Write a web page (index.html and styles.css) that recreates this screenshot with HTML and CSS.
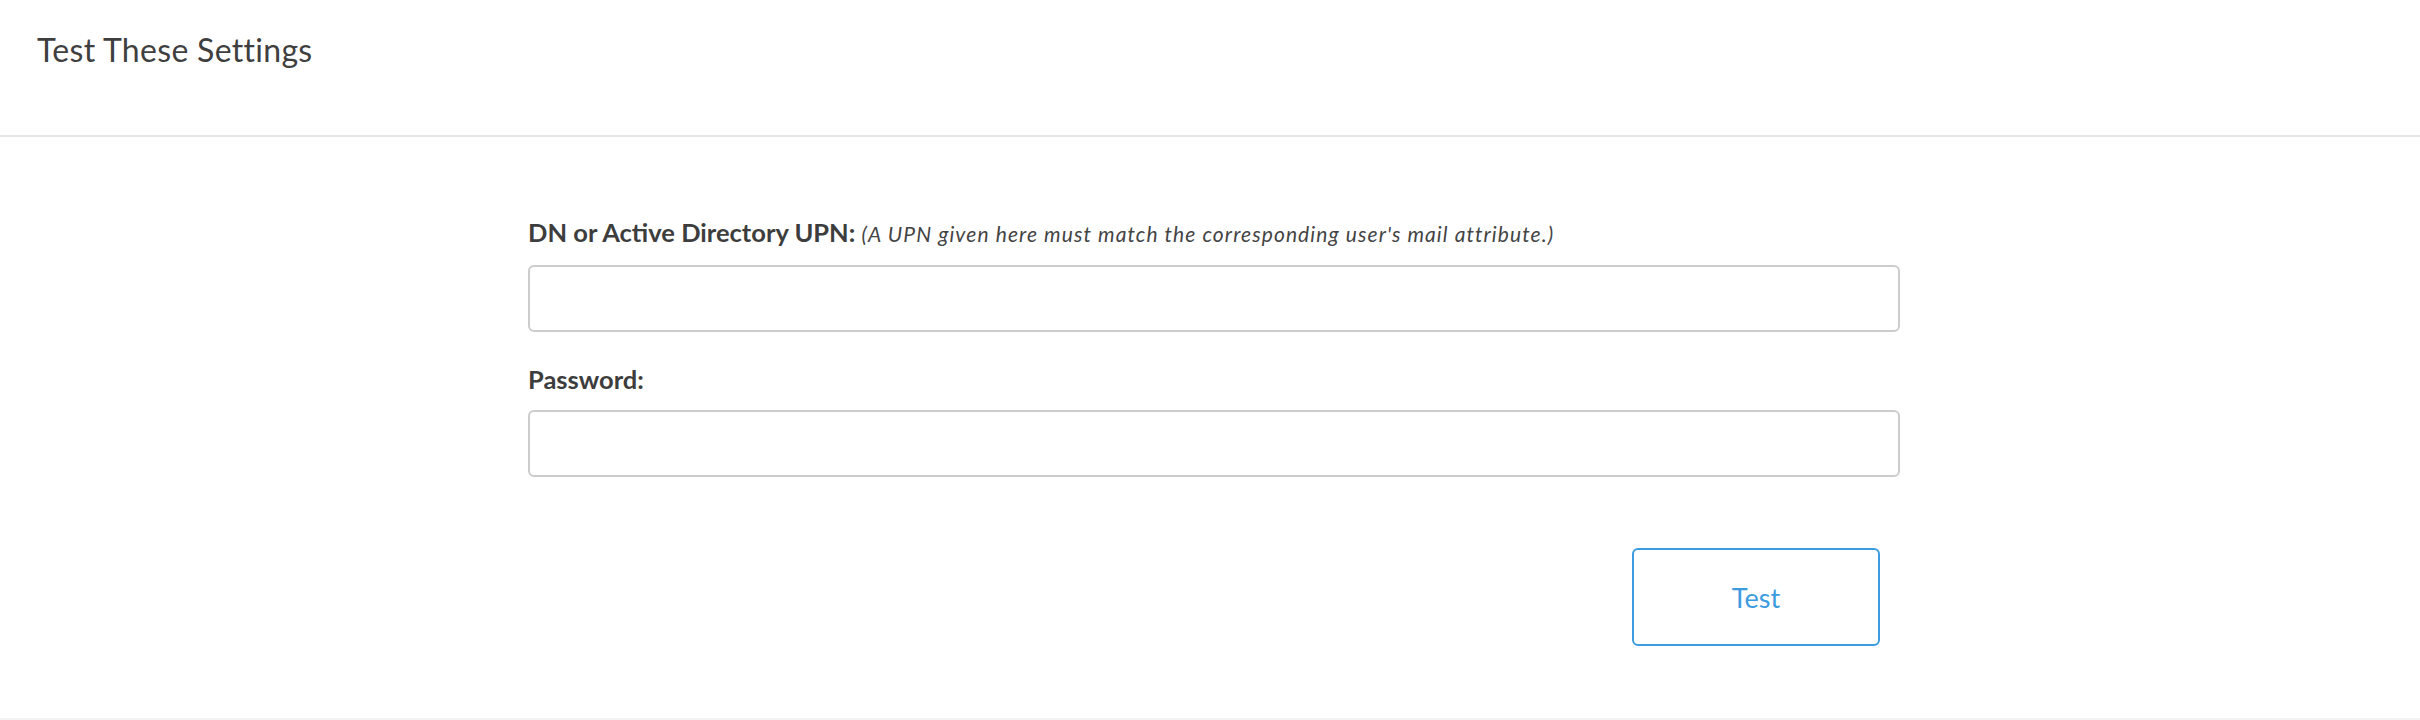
FILE: index.html
```html
<!DOCTYPE html>
<html lang="en">
<head>
<meta charset="utf-8">
<title>Test These Settings</title>
<link rel="stylesheet" href="styles.css">
</head>
<body>
<header class="panel-header">
  <h2 class="panel-title">Test These Settings</h2>
</header>
<main class="panel-body">
  <form class="test-form">
    <label class="field-label" for="upn">DN or Active Directory UPN: <span class="field-note">(A UPN given here must match the corresponding user's mail attribute.)</span></label>
    <input class="field-input" id="upn" type="text">
    <label class="field-label field-label-second" for="pw">Password:</label>
    <input class="field-input" id="pw" type="password">
    <div class="actions">
      <button class="btn-test" type="button">Test</button>
    </div>
  </form>
</main>
<div class="bottom-band"></div>
</body>
</html>
```

FILE: styles.css
```css
html, body {
  margin: 0;
  padding: 0;
  background: #ffffff;
}
body {
  font-family: Lato, "Open Sans", "Liberation Sans", sans-serif;
  color: #3d3d3d;
}
.panel-header {
  padding: 30px 37px 65px;
  border-bottom: 2px solid #e6e6e6;
}
.panel-title {
  margin: 0;
  font-size: 32px;
  line-height: 40px;
  font-weight: 400;
  letter-spacing: 0.3px;
  color: #3f3f3f;
}
.panel-body {
  padding: 80px 0 72px 8px;
}
.test-form {
  width: 1372px;
  margin: 0 auto;
  display: flex;
  flex-direction: column;
}
.field-label {
  display: block;
  font-size: 25.5px;
  line-height: 30px;
  font-weight: 700;
  color: #3d3d3d;
}
.field-label-second {
  margin-top: 32px;
}
.field-note {
  font-size: 21px;
  font-style: italic;
  font-weight: 400;
  letter-spacing: 1.1px;
  color: #444444;
}
.field-input {
  box-sizing: border-box;
  margin: 16px 0 0;
  width: 100%;
  height: 67px;
  border: 2px solid #cccccc;
  border-radius: 6px;
  background: #ffffff;
  padding: 0 16px;
  font: inherit;
  font-size: 22px;
  outline: none;
}
.actions {
  display: flex;
  justify-content: flex-end;
  margin-top: 71px;
  padding-right: 20px;
}
.btn-test {
  box-sizing: border-box;
  width: 248px;
  height: 98px;
  border: 2px solid #3d9be0;
  border-radius: 6px;
  background: #ffffff;
  color: #3d9be0;
  font-family: Lato, "Open Sans", "Liberation Sans", sans-serif;
  font-size: 27px;
  font-weight: 400;
  cursor: pointer;
}
.bottom-band {
  height: 4px;
  background: #f2f2f2;
}
```
